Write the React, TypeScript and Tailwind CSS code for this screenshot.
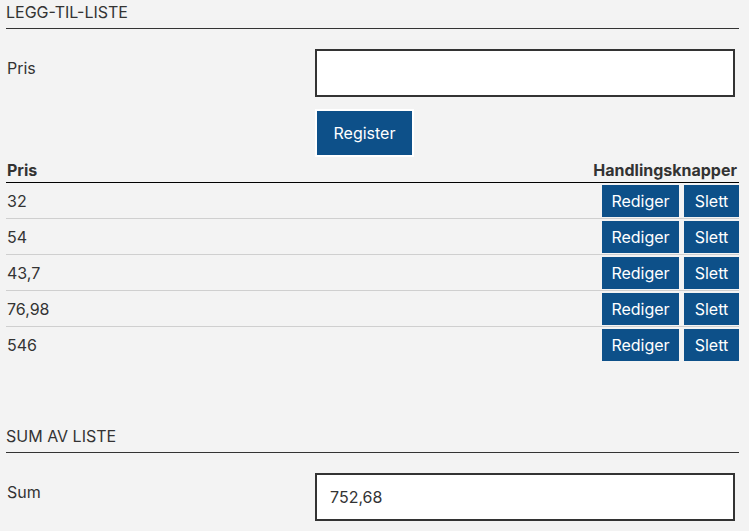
const rows = ["32", "54", "43,7", "76,98", "546"];

function SectionTitle({ children }: { children: string }) {
  return (
    <h2 className="border-b border-[#333] pb-[5px] text-[16px] leading-[22px] uppercase text-[#333]">
      {children}
    </h2>
  );
}

export default function App() {
  return (
    <div className="min-h-[531px] bg-[#f3f3f3] font-['Inter',sans-serif] text-[#333]">
      <div className="w-[739px] pl-[6px] pt-[1px]">
        <SectionTitle>Legg-til-liste</SectionTitle>

        {/* Add form */}
        <div className="mt-[20px] grid grid-cols-[309px_420px]">
          <label className="pl-[1px] pt-[9px] text-[16px] leading-[20px]">Pris</label>
          <div className="flex flex-col items-start gap-[12px]">
            <input className="h-[48px] w-full border-2 border-[#333] bg-white px-[13px] text-[16px] outline-none" />
            <button className="h-[48px] w-[99px] border-2 border-white bg-[#0d5089] text-[16px] text-white">
              Register
            </button>
          </div>
        </div>

        {/* List */}
        <div className="mt-[3px]">
          <div className="flex items-end justify-between border-b border-black pb-[2px] pl-[1px] pr-[2px] text-[16px] font-bold leading-[20px]">
            <span>Pris</span>
            <span>Handlingsknapper</span>
          </div>
          {rows.map((value, i) => (
            <div
              key={value}
              className={`flex h-[36px] items-center justify-between pl-[1px] text-[16px] ${
                i < rows.length - 1 ? "border-b border-[#cfcfcf]" : ""
              }`}
            >
              <span>{value}</span>
              <div className="flex gap-[5px]">
                <button className="h-[32px] w-[77px] bg-[#0d5089] text-[16px] text-white">Rediger</button>
                <button className="h-[32px] w-[55px] bg-[#0d5089] text-[16px] text-white">Slett</button>
              </div>
            </div>
          ))}
        </div>

        {/* Sum */}
        <div className="mt-[62px]">
          <SectionTitle>Sum av liste</SectionTitle>
          <div className="mt-[20px] grid grid-cols-[309px_420px]">
            <label className="pl-[1px] pt-[9px] text-[16px] leading-[20px]">Sum</label>
            <input
              readOnly
              value="752,68"
              className="h-[48px] w-full border-2 border-[#333] bg-white px-[13px] text-[16px] text-[#333] outline-none"
            />
          </div>
        </div>
      </div>
    </div>
  );
}
